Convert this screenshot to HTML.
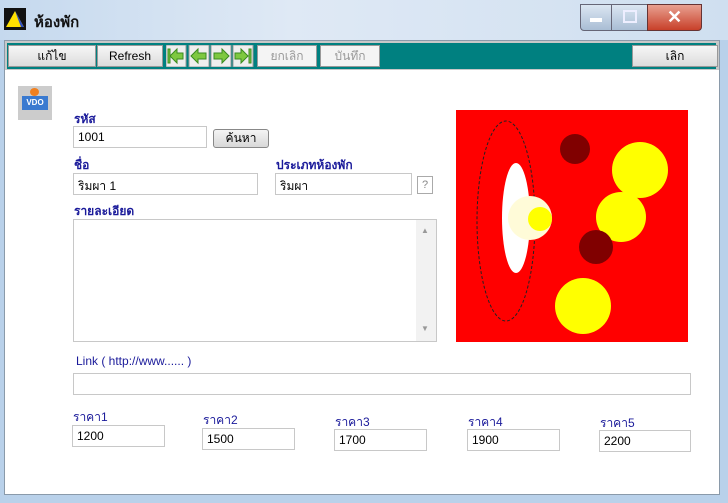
<!DOCTYPE html><html><head><meta charset="utf-8"><style>
body{margin:0;width:728px;height:503px;overflow:hidden;font-family:"Liberation Sans","Noto Sans CJK SC",sans-serif;font-size:12px;background:#b9d1ea;position:relative}
.a{position:absolute}
.inp{position:absolute;background:#fff;border:1px solid #c8c8c8;box-sizing:border-box;font-size:12px;padding:3px 4px;color:#000}
.lbl{position:absolute;color:#1a1a9a;font-size:12px;font-weight:bold;margin-top:-3px}
.btn{position:absolute;top:45px;height:22px;background:linear-gradient(#f6f6f6,#dcdcdc);border:1px solid #999;box-sizing:border-box;text-align:center;line-height:20px;font-size:12px}
</style></head><body>
<div class="a" style="left:0;top:0;width:728px;height:40px;background:linear-gradient(90deg,#c5d9ee,#dfe9f5 40%,#cfdff0)"></div>
<svg class="a" style="left:4px;top:8px" width="22" height="22"><rect width="22" height="22" fill="#111"/><polygon points="11,3 20,19 2,19" fill="#ffe000"/><polygon points="11,3 20,19 17,19" fill="#3050c0"/></svg>
<div class="a" style="left:34px;top:10px;font-size:15px;font-weight:bold;color:#111">ห้องพัก</div>
<div class="a" style="left:580px;top:4px;width:30px;height:25px;background:linear-gradient(#dbe6f2,#a9bdd4);border:1px solid #667;border-radius:0 0 0 4px"></div>
<div class="a" style="left:590px;top:18px;width:12px;height:4px;background:#fff"></div>
<div class="a" style="left:611px;top:4px;width:35px;height:25px;background:linear-gradient(#dbe6f2,#a9bdd4);border:1px solid #667"></div>
<div class="a" style="left:623px;top:10px;width:10px;height:9px;border:2px solid #eef"></div>
<div class="a" style="left:647px;top:4px;width:53px;height:25px;background:linear-gradient(#e8a090,#c8402a);border:1px solid #633;border-radius:0 0 4px 0;color:#fff;font-weight:bold;font-size:18px;text-align:center;line-height:25px">✕</div>
<div class="a" style="left:4px;top:40px;width:716px;height:455px;background:#fff;border:1px solid #8a9aaa;box-sizing:border-box"></div>
<div class="a" style="left:5px;top:41px;width:714px;height:29px;background:#c8c8c8"></div>
<div class="a" style="left:7px;top:43px;width:709px;height:26px;background:#008080"></div>
<div class="btn" style="left:8px;width:88px">แก้ไข</div>
<div class="btn" style="left:97px;width:66px">Refresh</div>
<svg class="a" style="left:166px;top:45px" width="89" height="22">
<g fill="#7ec840" stroke="#3a8a20"><rect x="0" y="0" width="20" height="22" fill="#eee" stroke="#999"/><rect x="23" y="0" width="20" height="22" fill="#eee" stroke="#999"/><rect x="45" y="0" width="20" height="22" fill="#eee" stroke="#999"/><rect x="67" y="0" width="20" height="22" fill="#eee" stroke="#999"/>
<polygon points="4,11 11,4 11,8 17,8 17,14 11,14 11,18"/><rect x="2" y="4" width="2" height="14"/>
<polygon points="25,11 32,4 32,8 40,8 40,14 32,14 32,18"/>
<polygon points="63,11 56,4 56,8 48,8 48,14 56,14 56,18"/>
<polygon points="82,11 75,4 75,8 69,8 69,14 75,14 75,18"/><rect x="83" y="4" width="2" height="14"/></g></svg>
<div class="btn" style="left:257px;width:60px;color:#999;background:#f4f4f4">ยกเลิก</div>
<div class="btn" style="left:320px;width:60px;color:#999;background:#f4f4f4">บันทึก</div>
<div class="btn" style="left:632px;width:86px">เลิก</div>
<div class="a" style="left:18px;top:86px;width:34px;height:34px;background:#ccc"></div>
<div class="a" style="left:22px;top:96px;width:26px;height:14px;background:#3a7ad0;color:#fff;font-size:8px;font-weight:bold;text-align:center;line-height:14px">VDO</div>
<div class="a" style="left:30px;top:88px;width:9px;height:8px;background:#f08020;border-radius:50%"></div>
<div class="lbl" style="left:74px;top:113px">รหัส</div>
<div class="inp" style="left:73px;top:126px;width:134px;height:22px">1001</div>
<div class="a" style="left:213px;top:129px;width:56px;height:19px;background:linear-gradient(#f4f4f4,#d8d8d8);border:1px solid #888;border-radius:3px;box-sizing:border-box;text-align:center;line-height:17px">ค้นหา</div>
<div class="lbl" style="left:74px;top:159px">ชื่อ</div>
<div class="inp" style="left:73px;top:173px;width:185px;height:22px">ริมผา 1</div>
<div class="lbl" style="left:276px;top:159px">ประเภทห้องพัก</div>
<div class="inp" style="left:275px;top:173px;width:137px;height:22px">ริมผา</div>
<div class="a" style="left:417px;top:176px;width:16px;height:18px;border:1px solid #aaa;box-sizing:border-box;color:#888;text-align:center;line-height:16px;font-size:11px">?</div>
<div class="lbl" style="left:74px;top:205px">รายละเอียด</div>
<div class="inp" style="left:73px;top:219px;width:364px;height:123px"></div>
<div class="a" style="left:416px;top:220px;width:20px;height:121px;background:#f2f2f2"></div>
<div class="a" style="left:421px;top:226px;color:#999;font-size:8px">▲</div>
<div class="a" style="left:421px;top:324px;color:#999;font-size:8px">▼</div>
<svg class="a" style="left:456px;top:110px" width="232" height="232"><rect width="232" height="232" fill="#f00"/>
<circle cx="184" cy="60" r="28" fill="#ff0"/><circle cx="119" cy="39" r="15" fill="#800000"/><circle cx="165" cy="107" r="25" fill="#ff0"/><circle cx="140" cy="137" r="17" fill="#800000"/><circle cx="127" cy="196" r="28" fill="#ff0"/>
<ellipse cx="50" cy="111" rx="29" ry="100" fill="none" stroke="#222" stroke-dasharray="3,2"/>
<ellipse cx="60" cy="108" rx="14" ry="55" fill="#fff"/><circle cx="74" cy="108" r="22" fill="#fffbd8"/><circle cx="84" cy="109" r="12" fill="#ff0"/></svg>
<div class="lbl" style="left:76px;top:357px;font-weight:normal">Link ( http://www...... )</div>
<div class="inp" style="left:73px;top:373px;width:618px;height:22px"></div>
<div class="lbl" style="left:73px;top:411px;font-weight:normal">ราคา1</div><div class="inp" style="left:72px;top:425px;width:93px;height:22px">1200</div>
<div class="lbl" style="left:203px;top:414px;font-weight:normal">ราคา2</div><div class="inp" style="left:202px;top:428px;width:93px;height:22px">1500</div>
<div class="lbl" style="left:335px;top:416px;font-weight:normal">ราคา3</div><div class="inp" style="left:334px;top:429px;width:93px;height:22px">1700</div>
<div class="lbl" style="left:468px;top:416px;font-weight:normal">ราคา4</div><div class="inp" style="left:467px;top:429px;width:93px;height:22px">1900</div>
<div class="lbl" style="left:600px;top:417px;font-weight:normal">ราคา5</div><div class="inp" style="left:599px;top:430px;width:92px;height:22px">2200</div>
</body></html>
